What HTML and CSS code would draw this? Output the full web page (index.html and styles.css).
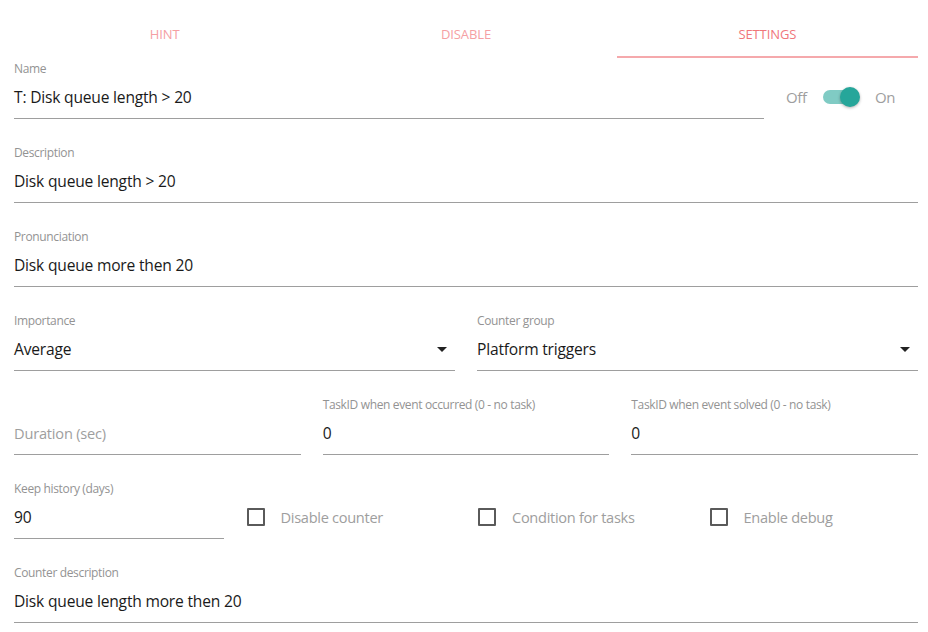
FILE: index.html
```html
<!DOCTYPE html>
<html>
<head>
<meta charset="utf-8">
<link rel="stylesheet" href="styles.css">
</head>
<body>
<div class="page">
  <div class="tabs">
    <div class="tab">HINT</div>
    <div class="tab">DISABLE</div>
    <div class="tab active">SETTINGS</div>
  </div>

  <div class="row-name">
    <div class="field grow">
      <div class="label">Name</div>
      <div class="input">T: Disk queue length &gt; 20</div>
    </div>
    <div class="toggle">
      <span class="toggle-text">Off</span>
      <span class="switch"><span class="track"></span><span class="thumb"></span></span>
      <span class="toggle-text">On</span>
    </div>
  </div>

  <div class="field">
    <div class="label">Description</div>
    <div class="input">Disk queue length &gt; 20</div>
  </div>

  <div class="field">
    <div class="label">Pronunciation</div>
    <div class="input">Disk queue more then 20</div>
  </div>

  <div class="grid grid-2">
    <div class="field">
      <div class="label">Importance</div>
      <div class="input select">Average<span class="caret"></span></div>
    </div>
    <div class="field">
      <div class="label">Counter group</div>
      <div class="input select">Platform triggers<span class="caret"></span></div>
    </div>
  </div>

  <div class="grid grid-3">
    <div class="field">
      <div class="label"></div>
      <div class="input placeholder">Duration (sec)</div>
    </div>
    <div class="field">
      <div class="label">TaskID when event occurred (0 - no task)</div>
      <div class="input">0</div>
    </div>
    <div class="field">
      <div class="label">TaskID when event solved (0 - no task)</div>
      <div class="input">0</div>
    </div>
  </div>

  <div class="grid grid-4">
    <div class="field">
      <div class="label">Keep history (days)</div>
      <div class="input">90</div>
    </div>
    <label class="check"><span class="box"></span><span class="check-text">Disable counter</span></label>
    <label class="check"><span class="box"></span><span class="check-text">Condition for tasks</span></label>
    <label class="check"><span class="box"></span><span class="check-text">Enable debug</span></label>
  </div>

  <div class="field">
    <div class="label">Counter description</div>
    <div class="input">Disk queue length more then 20</div>
  </div>
</div>
</body>
</html>
```

FILE: styles.css
```css
* { box-sizing: border-box; }
html, body { margin: 0; padding: 0; background: #fff; }
body {
  font-family: "Open Sans", "Noto Sans", sans-serif;
  color: #212121;
}
.page {
  padding: 10px 10px 0 14px;
}
.tabs {
  display: grid;
  grid-template-columns: 1fr 1fr 1fr;
  height: 48px;
  margin-bottom: 4px;
}
.tab {
  display: flex;
  align-items: center;
  justify-content: center;
  font-size: 13px;
  color: #f5a0a3;
  border-bottom: 2px solid transparent;
  padding-top: 2px;
  letter-spacing: -0.1px;
}
.tab.active {
  color: #f0767b;
  border-bottom-color: #f5a9ac;
}
.row-name {
  display: flex;
  align-items: flex-start;
}
.grow { flex: 1; }
.field {
  margin-bottom: 27px;
}
.label {
  height: 16px;
  line-height: 14px;
  font-size: 12px;
  color: #939393;
  white-space: nowrap;
  letter-spacing: -0.35px;
}
.input {
  height: 41px;
  line-height: 38px;
  font-size: 15.6px;
  color: #1a1a1a;
  border-bottom: 1px solid #9e9e9e;
  white-space: nowrap;
  letter-spacing: -0.2px;
}
.input.placeholder { color: #9e9e9e; font-size: 14.6px; }
.select {
  display: flex;
  justify-content: space-between;
  align-items: center;
  line-height: normal;
  padding-bottom: 2px;
}
.caret {
  width: 0;
  height: 0;
  border-left: 5px solid transparent;
  border-right: 5px solid transparent;
  border-top: 5px solid #222;
  margin-right: 8px;
}
.toggle {
  width: 154px;
  height: 56px;
  display: flex;
  align-items: center;
  padding-top: 14px;
  padding-left: 22px;
  font-size: 15px;
  color: #9e9e9e;
}
.toggle-text { letter-spacing: -0.3px; }
.switch {
  position: relative;
  width: 40px;
  height: 20px;
  margin: 0 13px 0 15px;
}
.track {
  position: absolute;
  left: 1px;
  top: 3px;
  width: 34px;
  height: 14px;
  border-radius: 7px;
  background: #80cbc4;
}
.thumb {
  position: absolute;
  left: 18px;
  top: 0;
  width: 20px;
  height: 20px;
  border-radius: 50%;
  background: #26a69a;
  box-shadow: 0 1px 3px rgba(0,0,0,0.3);
}
.grid {
  display: grid;
  column-gap: 22px;
}
.grid-2 { grid-template-columns: 1fr 1fr; }
.grid-3 { grid-template-columns: 1fr 1fr 1fr; }
.grid-4 { grid-template-columns: 1fr 1fr 1fr 1fr; }
.check {
  display: flex;
  align-items: center;
  height: 56px;
  padding-top: 14px;
  padding-left: 1px;
}
.box {
  width: 18px;
  height: 18px;
  border: 2px solid #5a5a5a;
  border-radius: 1px;
  margin-right: 16px;
}
.check-text {
  font-size: 14.6px;
  color: #9e9e9e;
  letter-spacing: -0.3px;
}
```
